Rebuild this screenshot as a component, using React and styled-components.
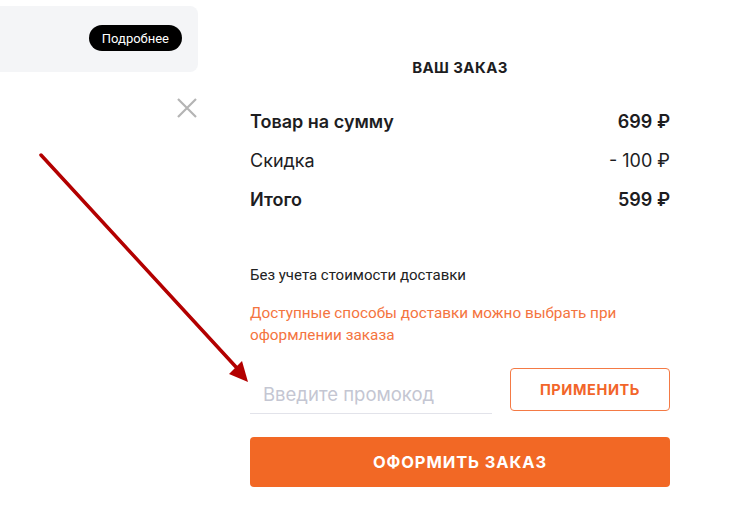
import React from "react";
import styled, { createGlobalStyle } from "styled-components";

const GlobalStyle = createGlobalStyle`
  html, body {
    margin: 0;
    padding: 0;
    background: #fff;
  }
  body {
    font-family: "Inter", "Roboto", sans-serif;
    color: #1d1d1f;
  }
`;

const Page = styled.div`
  position: relative;
  width: 752px;
  height: 524px;
  overflow: hidden;
  display: grid;
  grid-template-columns: 250px 420px;
`;

const Side = styled.div`
  display: flex;
  flex-direction: column;
  padding-top: 6px;
`;

const InfoCard = styled.div`
  width: 198px;
  height: 66px;
  box-sizing: border-box;
  background: #f4f5f7;
  border-radius: 0 8px 8px 0;
  display: flex;
  justify-content: flex-end;
  align-items: flex-start;
  padding: 19px 16px 0 0;
`;

const Pill = styled.button`
  border: none;
  background: #000;
  color: #fff;
  font-family: "Roboto", sans-serif;
  font-size: 13px;
  height: 26px;
  padding: 0 13px;
  border-radius: 13px;
  cursor: pointer;
`;

const Close = styled.button`
  align-self: flex-start;
  margin: 25px 0 0 176px;
  width: 22px;
  height: 22px;
  padding: 0;
  border: none;
  background: none;
  cursor: pointer;
`;

const Main = styled.div`
  display: flex;
  flex-direction: column;
`;

const Title = styled.h2`
  margin: 58px 0 0;
  text-align: center;
  font-size: 15px;
  font-weight: 700;
  letter-spacing: 0.4px;
  color: #1d1d1f;
`;

const Rows = styled.div`
  margin-top: 34px;
  display: flex;
  flex-direction: column;
  gap: 17px;
`;

const Row = styled.div`
  display: flex;
  justify-content: space-between;
  align-items: baseline;
  font-size: 18px;
  line-height: 22px;
  font-weight: ${({ $bold }) => ($bold ? 600 : 400)};
  color: #1d1d1f;
`;

const Note = styled.p`
  margin: 55px 0 0;
  font-family: "Roboto", sans-serif;
  font-size: 15px;
  color: #222;
`;

const Warning = styled.p`
  margin: 18px 0 0;
  font-family: "Roboto", sans-serif;
  font-size: 15.3px;
  line-height: 22px;
  color: #f47440;
`;

const PromoRow = styled.div`
  margin-top: 22px;
  display: flex;
  justify-content: space-between;
  align-items: flex-start;
`;

const PromoInput = styled.input`
  width: 242px;
  height: 46px;
  box-sizing: border-box;
  border: none;
  border-bottom: 1px solid #e2e3ea;
  padding: 6px 13px 0;
  font-family: "Inter", sans-serif;
  font-size: 18.5px;
  color: #333;
  outline: none;
  &::placeholder {
    color: #c4c6d2;
  }
`;

const ApplyButton = styled.button`
  width: 160px;
  height: 43px;
  border: 1px solid #f47a45;
  border-radius: 4px;
  background: #fff;
  color: #f2652a;
  font-family: "Inter", sans-serif;
  font-weight: 700;
  font-size: 14.5px;
  letter-spacing: 0.6px;
  cursor: pointer;
`;

const OrderButton = styled.button`
  margin-top: 23px;
  height: 50px;
  border: none;
  border-radius: 4px;
  background: #f26825;
  color: #fff;
  font-family: "Inter", sans-serif;
  font-weight: 700;
  font-size: 16.5px;
  letter-spacing: 0.9px;
  cursor: pointer;
`;

const Arrow = styled.svg`
  position: absolute;
  left: 0;
  top: 0;
  pointer-events: none;
`;

const rows = [
  { label: "Товар на сумму", value: "699 ₽", bold: true },
  { label: "Скидка", value: "- 100 ₽" },
  { label: "Итого", value: "599 ₽", bold: true },
];

export default function App() {
  return (
    <>
      <GlobalStyle />
      <Page>
        <Side>
          <InfoCard>
            <Pill>Подробнее</Pill>
          </InfoCard>
          <Close aria-label="Закрыть">
            <svg width="22" height="22" viewBox="0 0 22 22">
              <path d="M2 2L20 20M20 2L2 20" stroke="#b4b4b4" strokeWidth="2.2" />
            </svg>
          </Close>
        </Side>
        <Main>
          <Title>ВАШ ЗАКАЗ</Title>
          <Rows>
            {rows.map((r) => (
              <Row key={r.label} $bold={r.bold}>
                <span>{r.label}</span>
                <span>{r.value}</span>
              </Row>
            ))}
          </Rows>
          <Note>Без учета стоимости доставки</Note>
          <Warning>
            Доступные способы доставки можно выбрать при
            <br />
            оформлении заказа
          </Warning>
          <PromoRow>
            <PromoInput placeholder="Введите промокод" />
            <ApplyButton>ПРИМЕНИТЬ</ApplyButton>
          </PromoRow>
          <OrderButton>ОФОРМИТЬ ЗАКАЗ</OrderButton>
        </Main>
        <Arrow width="752" height="524" viewBox="0 0 752 524">
          <line x1="41" y1="155" x2="236" y2="367" stroke="#b30000" strokeWidth="3.5" strokeLinecap="round" />
          <polygon points="248,382 229,374 242,361" fill="#b30000" />
        </Arrow>
      </Page>
    </>
  );
}
